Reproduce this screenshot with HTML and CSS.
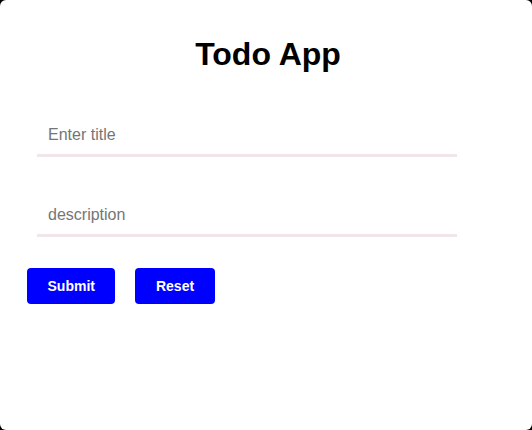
FILE: index.html
```html
<!DOCTYPE html>
<html lang="en">
<head>
<meta charset="utf-8">
<title>Todo App</title>
<link rel="stylesheet" href="styles.css">
</head>
<body>
<main class="app">
  <h1 class="title">Todo App</h1>
  <form class="todo-form">
    <input class="field" type="text" placeholder="Enter title">
    <input class="field" type="text" placeholder="description">
    <div class="actions">
      <button class="btn" type="button">Submit</button>
      <button class="btn" type="reset">Reset</button>
    </div>
  </form>
</main>
</body>
</html>
```
FILE: styles.css
```css
html {
  background: #000;
  height: 100%;
}
body {
  margin: 0;
  height: 100%;
  font-family: "Liberation Sans", Arial, sans-serif;
}
.app {
  background: #fff;
  height: 100%;
  border-radius: 6px;
  box-sizing: border-box;
  padding-top: 36px;
}
.title {
  margin: 0;
  padding-left: 4px;
  text-align: center;
  font-size: 32px;
  font-weight: bold;
  color: #000;
  line-height: 1.15;
}
.todo-form {
  display: flex;
  flex-direction: column;
  align-items: flex-start;
  padding: 43px 27px 0;
  gap: 39px;
}
.field {
  width: 420px;
  margin: 0 10px;
  box-sizing: border-box;
  border: none;
  border-bottom: 3px solid #f1e6ea;
  padding: 10px 11px;
  font-family: "Liberation Sans", Arial, sans-serif;
  font-size: 16px;
  line-height: 18px;
  height: 41px;
  outline: none;
  background: transparent;
}
.field::placeholder {
  color: #757575;
}
.actions {
  display: flex;
  gap: 20px;
  margin-top: -8px;
}
.btn {
  height: 36px;
  padding: 0 20.5px;
  border: none;
  border-radius: 4px;
  background: #0000ff;
  color: #fff;
  font-family: "Liberation Sans", Arial, sans-serif;
  font-weight: bold;
  font-size: 14px;
}
```
